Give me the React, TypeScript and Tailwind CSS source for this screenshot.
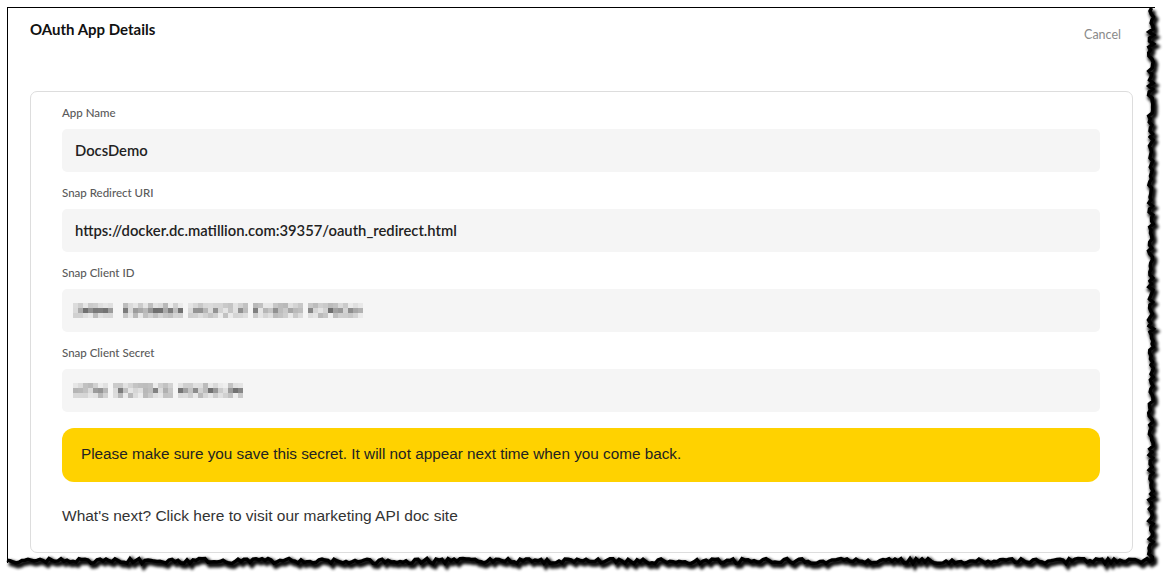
import React from "react";

function rng(seed: number) {
  let s = seed;
  return () => {
    s = (s * 1103515245 + 12345) % 2147483648;
    return s / 2147483648;
  };
}

function TornEdge() {
  const r = rng(7);
  const pts: string[] = [];
  for (let y = 8; y <= 560; y += 3) {
    const x = 1151 + (r() - 0.5) * 5;
    pts.push(`${x.toFixed(1)},${y}`);
  }
  for (let x = 1150; x >= 7; x -= 3) {
    const y = 561 + (r() - 0.5) * 5;
    pts.push(`${x},${y.toFixed(1)}`);
  }
  const d = "M" + pts.join(" L");
  return (
    <svg
      className="absolute left-0 top-0 pointer-events-none"
      width={1166}
      height={577}
      viewBox="0 0 1166 577"
    >
      <defs>
        <filter id="blur1" x="-5%" y="-5%" width="110%" height="110%">
          <feGaussianBlur stdDeviation="1.8" />
        </filter>
      </defs>
      <path d={d} fill="none" stroke="#000" strokeWidth={6} transform="translate(2,2.5)" filter="url(#blur1)" opacity={0.95} />
      <path d={d} fill="none" stroke="#000" strokeWidth={3.5} />
    </svg>
  );
}

function Mosaic({ width, seed, gaps }: { width: number; seed: number; gaps: number[] }) {
  const r = rng(seed);
  const cell = 5;
  const cols = Math.floor(width / cell);
  const rects: React.ReactNode[] = [];
  for (let row = 0; row < 3; row++) {
    for (let c = 0; c < cols; c++) {
      if (gaps.includes(c)) continue;
      const v = r();
      let shade: number;
      if (row === 1) shade = 110 + Math.floor(v * 120);
      else shade = 185 + Math.floor(v * 55);
      rects.push(
        <rect
          key={`${row}-${c}`}
          x={c * cell}
          y={row * cell}
          width={cell}
          height={cell}
          fill={`rgb(${shade},${shade},${shade})`}
        />
      );
    }
  }
  return (
    <svg width={cols * cell} height={15} viewBox={`0 0 ${cols * cell} 15`}>
      {rects}
    </svg>
  );
}

function Field({ label, children }: { label: string; children: React.ReactNode }) {
  return (
    <div className="flex flex-col">
      <div className="text-[11.5px] leading-[14px] text-[#5a5a5a] font-medium">{label}</div>
      <div className="mt-[9px] h-[43px] rounded-[5px] bg-[#f5f5f5] flex items-center pl-[13px] text-[14.8px] font-semibold text-[#222]">
        {children}
      </div>
    </div>
  );
}

export default function App() {
  return (
    <div
      className="relative w-[1166px] h-[577px] bg-white overflow-hidden"
      style={{ fontFamily: "Lato, 'Noto Sans', sans-serif" }}
    >
      <div className="ml-[7px] mt-[7px] w-[1148px] h-[556px] border-l border-t border-black">
        <div className="flex justify-between pl-[22px] pr-[34px] pt-[12px]">
          <div className="text-[15px] font-bold text-[#111] leading-[18px]">OAuth App Details</div>
          <div className="text-[12.5px] text-[#8a8a8a] mt-[6px]">Cancel</div>
        </div>
        <div className="ml-[22px] mt-[46px] w-[1103px] h-[462px] rounded-[7px] border border-[#dddddd] pl-[31px] pr-[32px] pt-[14px] flex flex-col gap-[14px]">
          <Field label="App Name">DocsDemo</Field>
          <Field label="Snap Redirect URI">https://docker.dc.matillion.com:39357/oauth_redirect.html</Field>
          <Field label="Snap Client ID">
            <div className="-ml-[2px]">
              <Mosaic width={290} seed={11} gaps={[8, 9, 22, 35, 46]} />
            </div>
          </Field>
          <Field label="Snap Client Secret">
            <div className="-ml-[2px]">
              <Mosaic width={170} seed={23} gaps={[7, 20]} />
            </div>
          </Field>
          <div
            className="mt-[2px] h-[54px] rounded-[12px] bg-[#ffd200] flex items-center pl-[19px] text-[15.3px] text-[#222]"
            style={{ fontFamily: "'Liberation Sans', Arial, sans-serif" }}
          >
            Please make sure you save this secret. It will not appear next time when you come back.
          </div>
          <div
            className="mt-[8px] text-[15.5px] text-[#333]"
            style={{ fontFamily: "'Liberation Sans', Arial, sans-serif" }}
          >
            What's next? Click here to visit our marketing API doc site
          </div>
        </div>
      </div>
      <TornEdge />
    </div>
  );
}
